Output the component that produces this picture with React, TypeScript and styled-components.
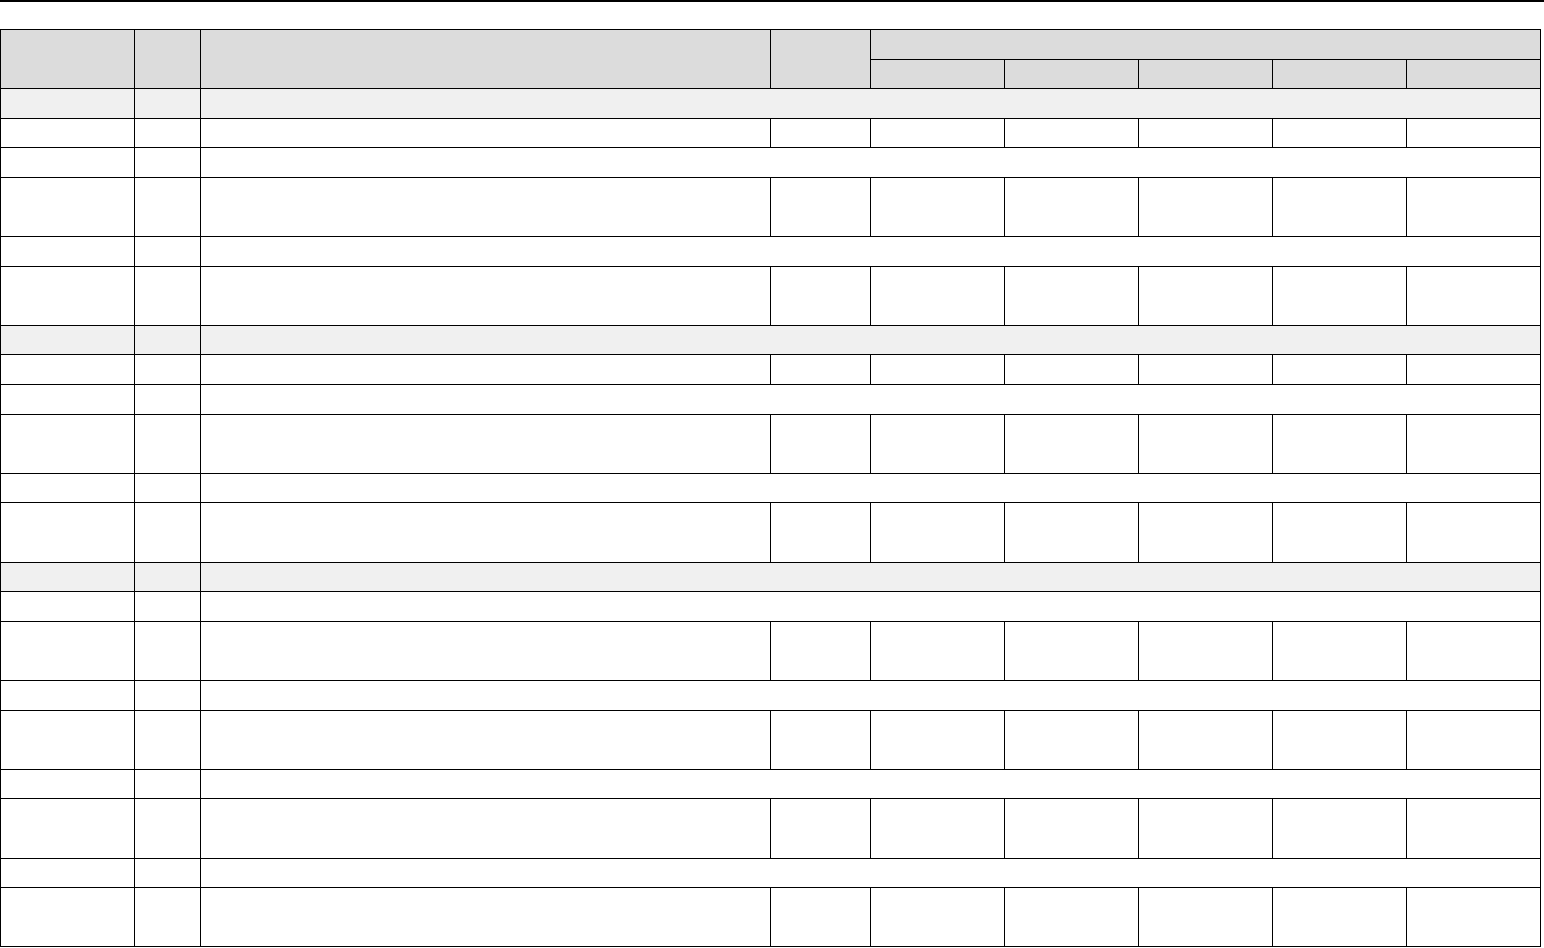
import React from "react";
import styled, { createGlobalStyle } from "styled-components";

type RowKind = "section" | "full" | "span" | "double";

const rows: RowKind[] = [
  "section",
  "full",
  "span",
  "double",
  "span",
  "double",
  "section",
  "full",
  "span",
  "double",
  "span",
  "double",
  "section",
  "span",
  "double",
  "span",
  "double",
  "span",
  "double",
  "span",
  "double",
];

const colWidths = [134, 66, 570, 100, 134, 134, 134, 134, 134];

const GlobalStyle = createGlobalStyle`
  html, body {
    margin: 0;
    padding: 0;
    background: #ffffff;
    font-family: "Liberation Sans", Arial, sans-serif;
  }
`;

const Page = styled.div`
  width: 1544px;
  display: flex;
  flex-direction: column;
  gap: 27px;
`;

const TopRule = styled.div`
  height: 2px;
  width: 1544px;
  background: #000;
`;

const Sheet = styled.table`
  border-collapse: collapse;
  table-layout: fixed;
  width: 1541px;
`;

const HeadRow = styled.tr`
  height: 29.5px;
  background: #dcdcdc;
`;

const BodyRow = styled.tr<{ $kind: RowKind }>`
  height: ${(p) => (p.$kind === "double" ? "59.22px" : "29.6px")};
  background: ${(p) => (p.$kind === "section" ? "#f0f0f0" : "#ffffff")};
`;

const HeadCell = styled.th`
  border: 1px solid #000;
  padding: 0;
  font-size: 13px;
  font-weight: 700;
`;

const Cell = styled.td`
  border: 1px solid #000;
  padding: 0;
  font-size: 13px;
`;

const App = () => {
  return (
    <>
      <GlobalStyle />
      <Page>
        <TopRule />
        <Sheet>
          <colgroup>
            {colWidths.map((w, i) => (
              <col key={i} style={{ width: w }} />
            ))}
          </colgroup>
          <thead>
            <HeadRow>
              <HeadCell rowSpan={2}></HeadCell>
              <HeadCell rowSpan={2}></HeadCell>
              <HeadCell rowSpan={2}></HeadCell>
              <HeadCell rowSpan={2}></HeadCell>
              <HeadCell colSpan={5}></HeadCell>
            </HeadRow>
            <HeadRow>
              {[0, 1, 2, 3, 4].map((i) => (
                <HeadCell key={i}></HeadCell>
              ))}
            </HeadRow>
          </thead>
          <tbody>
            {rows.map((kind, i) => (
              <BodyRow key={i} $kind={kind}>
                <Cell></Cell>
                <Cell></Cell>
                {kind === "section" || kind === "span" ? (
                  <Cell colSpan={7}></Cell>
                ) : (
                  [0, 1, 2, 3, 4, 5, 6].map((j) => <Cell key={j}></Cell>)
                )}
              </BodyRow>
            ))}
          </tbody>
        </Sheet>
      </Page>
    </>
  );
};

export default App;
